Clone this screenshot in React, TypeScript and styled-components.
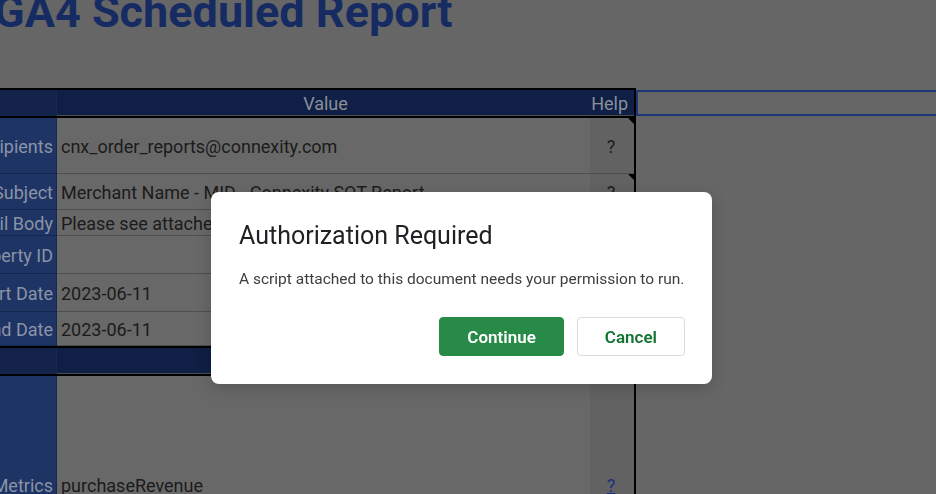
import styled, { createGlobalStyle } from "styled-components";

const GlobalStyle = createGlobalStyle`
  html, body {
    margin: 0;
    padding: 0;
    background: #666666;
    overflow: hidden;
  }
  body {
    font-family: Roboto, "Liberation Sans", Arial, sans-serif;
  }
`;

const Page = styled.div`
  width: 936px;
  height: 494px;
  overflow: hidden;
  background: #666666;
  display: flex;
  flex-direction: column;
`;

const Title = styled.h1`
  margin: -11px 0 0 -6px;
  font-size: 45px;
  line-height: 45px;
  font-weight: 700;
  color: #172b63;
  white-space: nowrap;
`;

const Sheet = styled.div`
  display: flex;
  align-items: flex-start;
  margin-top: 54px;
`;

const Table = styled.div`
  width: 636px;
  flex-shrink: 0;
  box-sizing: border-box;
  border-top: 2px solid #000;
  border-right: 2px solid #000;
  display: flex;
  flex-direction: column;
`;

const SelectionBox = styled.div`
  flex: 1;
  height: 26px;
  margin-top: 2px;
  box-sizing: border-box;
  border: 2px solid #1d3678;
  border-right: none;
`;

const Row = styled.div<{ $height: number; $edge?: boolean; $bottom?: boolean }>`
  display: flex;
  height: ${(p) => p.$height}px;
  flex-shrink: 0;
  box-sizing: border-box;
  border-bottom: ${(p) => (p.$edge ? "2px solid #000" : "none")};

  & > * {
    align-items: ${(p) => (p.$bottom ? "flex-end" : "center")};
    ${(p) => (p.$edge ? "box-shadow: none;" : "")}
  }
`;

const BaseCell = styled.div`
  display: flex;
  box-sizing: border-box;
  overflow: hidden;
  white-space: nowrap;
  font-size: 18px;
  line-height: 21px;
`;

const LabelCell = styled(BaseCell)<{ $head?: boolean }>`
  width: 57px;
  justify-content: flex-end;
  padding-right: 4px;
  background: ${(p) => (p.$head ? "#122249" : "#1e3464")};
  color: #8b93a6;
  box-shadow: inset 0 -1px 0 #15274f, inset -1px 0 0 #18294f;
`;

const ValueCell = styled(BaseCell)<{ $head?: boolean }>`
  width: 533px;
  justify-content: ${(p) => (p.$head ? "center" : "flex-start")};
  padding-left: 4px;
  background: ${(p) => (p.$head ? "#0f1f45" : "#686868")};
  color: ${(p) => (p.$head ? "#8b8f99" : "#1b1b1b")};
  box-shadow: inset 0 -1px 0 #4e4e4e;
`;

const HelpCell = styled(BaseCell)<{ $head?: boolean; $note?: boolean }>`
  position: relative;
  width: 44px;
  justify-content: ${(p) => (p.$head ? "flex-end" : "center")};
  padding-right: ${(p) => (p.$head ? "6px" : "2px")};
  background: ${(p) => (p.$head ? "#0f1f45" : "#626262")};
  color: ${(p) => (p.$head ? "#8b8f99" : "#1b1b1b")};
  box-shadow: inset 0 -1px 0 #4e4e4e;

  &::after {
    content: "";
    display: ${(p) => (p.$note ? "block" : "none")};
    position: absolute;
    top: 0;
    right: 0;
    border-top: 6px solid #000;
    border-left: 6px solid transparent;
  }
`;

const HelpLink = styled.a`
  color: #1b2f80;
  text-decoration: underline;
`;

const Dialog = styled.div`
  position: fixed;
  left: 211px;
  top: 192px;
  width: 501px;
  height: 192px;
  box-sizing: border-box;
  padding: 28px 27px 0 28px;
  background: #ffffff;
  border-radius: 8px;
  box-shadow: 0 4px 16px rgba(0, 0, 0, 0.18);
  display: flex;
  flex-direction: column;
`;

const DialogTitle = styled.h2`
  margin: 0;
  font-size: 25px;
  line-height: 32px;
  font-weight: 400;
  color: #202124;
`;

const DialogText = styled.p`
  margin: 17px 0 0;
  font-size: 15.5px;
  line-height: 20px;
  color: #3c4043;
`;

const Actions = styled.div`
  display: flex;
  justify-content: flex-end;
  gap: 13px;
  margin-top: 28px;
`;

const Button = styled.button<{ $primary?: boolean }>`
  height: 39px;
  padding: 0 27px;
  border-radius: 4px;
  font-family: Roboto, "Liberation Sans", Arial, sans-serif;
  font-size: 17px;
  font-weight: 600;
  cursor: pointer;
  background: ${(p) => (p.$primary ? "#278b47" : "#ffffff")};
  color: ${(p) => (p.$primary ? "#ffffff" : "#137333")};
  border: 1px solid ${(p) => (p.$primary ? "#278b47" : "#dadce0")};
`;

const rows = [
  { label: "Recipients", value: "cnx_order_reports@connexity.com", height: 56, help: "?", note: true },
  { label: "Subject", value: "Merchant Name - MID - Connexity SOT Report", height: 36, help: "?", note: true },
  { label: "Email Body", value: "Please see attached report", height: 26 },
  { label: "Property ID", value: "", height: 38 },
  { label: "Start Date", value: "2023-06-11", height: 38 },
  { label: "End Date", value: "2023-06-11", height: 36, edge: true },
];

export default function App() {
  return (
    <Page>
      <GlobalStyle />
      <Title>GA4 Scheduled Report</Title>

      <Sheet>
        <Table>
          <Row $height={28} $edge>
            <LabelCell $head />
            <ValueCell $head>Value</ValueCell>
            <HelpCell $head>Help</HelpCell>
          </Row>

          {rows.map((r) => (
            <Row key={r.label} $height={r.height} $edge={r.edge}>
              <LabelCell>{r.label}</LabelCell>
              <ValueCell>{r.value}</ValueCell>
              <HelpCell $note={r.note}>{r.help}</HelpCell>
            </Row>
          ))}

          <Row $height={28} $edge>
            <LabelCell $head />
            <ValueCell $head />
            <HelpCell $head />
          </Row>

          <Row $height={120} $bottom>
            <LabelCell>Metrics</LabelCell>
            <ValueCell>purchaseRevenue</ValueCell>
            <HelpCell>
              <HelpLink href="#">?</HelpLink>
            </HelpCell>
          </Row>
        </Table>
        <SelectionBox />
      </Sheet>

      <Dialog role="dialog">
        <DialogTitle>Authorization Required</DialogTitle>
        <DialogText>A script attached to this document needs your permission to run.</DialogText>
        <Actions>
          <Button $primary>Continue</Button>
          <Button>Cancel</Button>
        </Actions>
      </Dialog>
    </Page>
  );
}
